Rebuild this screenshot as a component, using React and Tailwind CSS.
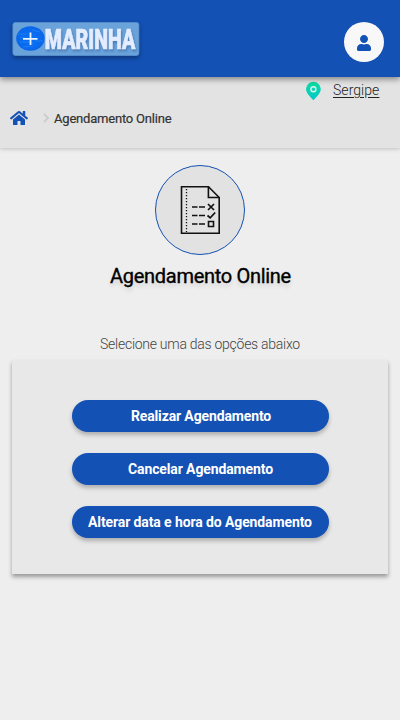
import { FaHome, FaUser } from "react-icons/fa";

function Logo() {
  return (
    <svg width="144" height="48" viewBox="0 0 144 48" className="overflow-visible drop-shadow-[0_2px_2px_rgba(0,0,0,0.35)]" role="img">
      <defs>
        <radialGradient id="sea">
          <stop offset="0" stopColor="#0873f6" />
          <stop offset="1" stopColor="#0b66ea" />
        </radialGradient>
      </defs>
      <rect x="4.9" y="4.5" width="126" height="33" rx="2.5" fill="#6aa2da" stroke="#5b93d2" strokeWidth="0.8" />
      <ellipse cx="22.4" cy="20.5" rx="14.2" ry="12.2" fill="url(#sea)" />
      <path d="M9 16h9M12 24h11l3 2M24 12l8 2M15 29l10-1M27 23h8M12 19l6 1" stroke="#2b8cf8" strokeWidth="1.2" opacity="0.6" fill="none" />
      <path d="M22.5 14.5v12.5M15 20.8h14.5" stroke="#e8f3ff" strokeWidth="1.8" />
      <g className="drop-shadow-[1px_2px_1px_rgba(30,70,130,0.4)]">
        <text x="36.8" y="30.6" textLength="90.5" lengthAdjust="spacingAndGlyphs" fontFamily="Roboto, sans-serif" fontSize="27.5" fontWeight="900" fill="#e4ecff" stroke="#e4ecff" strokeWidth="0.7">MARINHA</text>
      </g>
    </svg>
  );
}

function Pin() {
  return (
    <svg width="16" height="20" viewBox="0 0 16 20">
      <defs>
        <linearGradient id="pin" x1="0" y1="0" x2="0" y2="1">
          <stop offset="0" stopColor="#0ddda0" />
          <stop offset="1" stopColor="#05c6cb" />
        </linearGradient>
      </defs>
      <path d="M8.4 .8A7.4 7.4 0 0 0 1 8.1C1 12.3 5.4 16 8.4 19.3c3-3.3 7.4-7 7.4-11.2A7.4 7.4 0 0 0 8.4 .8Z" fill="url(#pin)" />
      <circle cx="8.4" cy="8.2" r="2.5" fill="none" stroke="#d8f5ed" strokeWidth="1.4" />
    </svg>
  );
}

function ChecklistIcon() {
  return (
    <svg width="40" height="50" viewBox="0 0 40 50" fill="none" stroke="#111">
      <path d="M1.5 1.7h27L39.2 12.5V48.3H1.5Z" strokeWidth="1.6" />
      <path d="M28.4 1.7v10.8h10.8" strokeWidth="1.6" />
      <path d="M6.5 4v43" strokeWidth="1.3" strokeDasharray="1.3 1.7" />
      <path d="M12 22h5.5M19 22h6M12 30.5h5.5M19 30.5h6M12 39h5.5M19 39h6" strokeWidth="1.6" />
      <path d="m28 19 6 6m0-6-6 6M27.5 30.5l2.7 2.3 5-5.3" strokeWidth="1.7" />
      <path d="M28.5 36.5h5v5h-5Z" strokeWidth="1.6" />
    </svg>
  );
}

const actions = [
  { label: "Realizar Agendamento", tracking: "pl-0.5 tracking-[-0.13px]" },
  { label: "Cancelar Agendamento", tracking: "pl-px tracking-[-0.12px]" },
  { label: "Alterar data e hora do Agendamento", tracking: "tracking-[-0.11px]" },
];

export default function App() {
  return (
    <div className="flex h-[720px] w-full flex-col bg-[#eeeeee] font-[Roboto,sans-serif] text-black">
      <header className="relative z-10 flex h-[77px] shrink-0 items-start justify-between bg-[#1351b4] pr-4 pl-2 shadow-[0_2px_6px_rgba(0,0,0,0.45)]">
        <div className="pt-[18px]"><Logo /></div>
        <button className="mt-[22px] flex size-10 items-center justify-center rounded-full bg-[#f8f8f8] text-[#1351b4]">
          <FaUser className="mt-0.5 h-4 w-[14px]" />
        </button>
      </header>
      <section className="h-[71px] shrink-0 bg-[#e3e3e3] shadow-[0_1px_4px_rgba(0,0,0,0.2)]">
        <div className="flex h-[27px] justify-end gap-3 pt-1 pr-5">
          <Pin />
          <a className="h-5 w-[47px] text-sm leading-[19px] font-light tracking-[0.05px] whitespace-nowrap text-[#222] underline underline-offset-2">Sergipe</a>
        </div>
        <nav className="flex h-7 items-center pl-[10px]">
          <FaHome className="h-4 w-[18px] text-[#1351b4]" />
          <svg className="ml-[15px]" width="6" height="10" viewBox="0 0 6 10" fill="none" stroke="#cccccc" strokeWidth="1.8"><path d="m1 1 4 4-4 4" /></svg>
          <span className="ml-[5px] pt-px text-[13px] font-normal tracking-[-0.2px] text-[#333] [-webkit-text-stroke:0.2px]">Agendamento Online</span>
        </nav>
      </section>
      <main className="flex flex-col items-center px-3 pt-[17px]">
        <div className="flex size-[90px] items-center justify-center rounded-full border border-[#1351b4] bg-[#e2e2e2]"><ChecklistIcon /></div>
        <h1 className="mt-[7px] pl-px text-xl leading-7 font-normal tracking-[-0.3px] whitespace-nowrap [-webkit-text-stroke:0.35px] text-shadow-[0_4px_4px_rgba(0,0,0,0.12)]">Agendamento Online</h1>
        <p className="mt-[44px] text-sm leading-5 font-light tracking-[-0.27px] whitespace-nowrap text-[#444]">Selecione uma das opções abaixo</p>
        <div className="mt-[6px] flex h-[214px] w-full flex-col items-center gap-[21px] bg-[#e8e8e8] pt-10 shadow-[0_3px_4px_rgba(0,0,0,0.35)]">
          {actions.map(({ label, tracking }) => (
            <button key={label} className={`h-8 w-[257px] shrink-0 rounded-full bg-[#1351b4] text-sm font-bold whitespace-nowrap text-white shadow-[0_3px_4px_rgba(0,0,0,0.25)] ${tracking}`}>{label}</button>
          ))}
        </div>
      </main>
    </div>
  );
}
